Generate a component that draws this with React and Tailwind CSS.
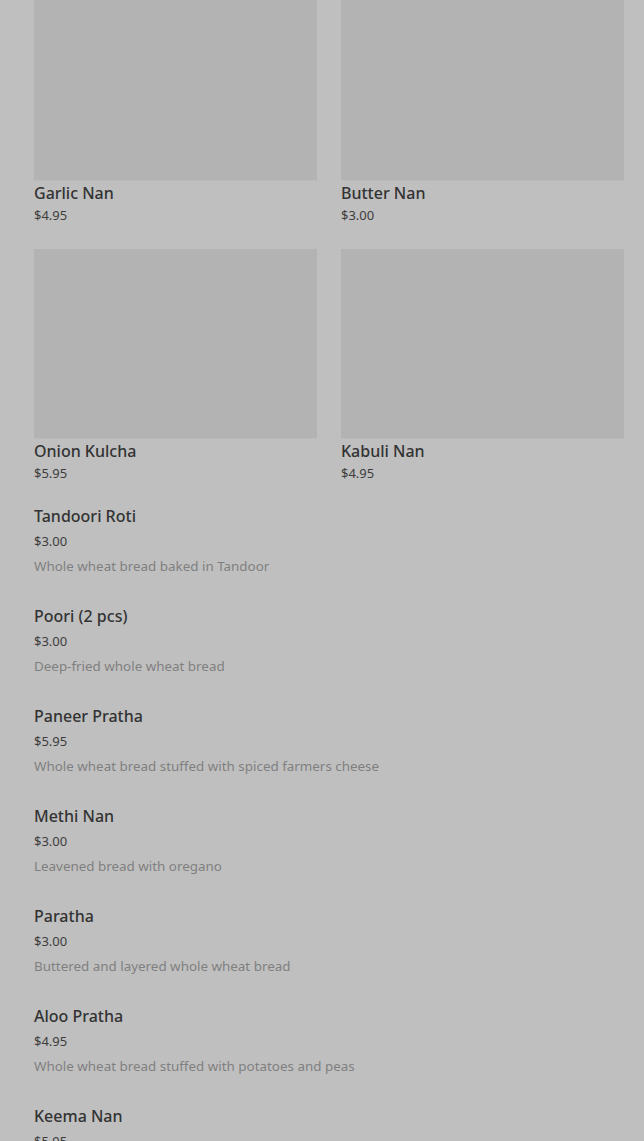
import React from 'react';

const gridItems = [
  { name: 'Garlic Nan', price: '$4.95' },
  { name: 'Butter Nan', price: '$3.00' },
  { name: 'Onion Kulcha', price: '$5.95' },
  { name: 'Kabuli Nan', price: '$4.95' },
];

const listItems = [
  { name: 'Tandoori Roti', price: '$3.00', desc: 'Whole wheat bread baked in Tandoor' },
  { name: 'Poori (2 pcs)', price: '$3.00', desc: 'Deep-fried whole wheat bread' },
  { name: 'Paneer Pratha', price: '$5.95', desc: 'Whole wheat bread stuffed with spiced farmers cheese' },
  { name: 'Methi Nan', price: '$3.00', desc: 'Leavened bread with oregano' },
  { name: 'Paratha', price: '$3.00', desc: 'Buttered and layered whole wheat bread' },
  { name: 'Aloo Pratha', price: '$4.95', desc: 'Whole wheat bread stuffed with potatoes and peas' },
  { name: 'Keema Nan', price: '$5.95', desc: 'Leavened bread stuffed with spiced minced lamb' },
];

const App = () => {
  return (
    <div className="min-h-screen h-[1141px] overflow-hidden bg-[#bfbfbf] font-['Noto_Sans',sans-serif]">
      <div className="pl-[34px] pr-[20px] -mt-[9px]">
        <div className="grid grid-cols-2 gap-x-[24px] gap-y-[24px]">
          {gridItems.map((item) => (
            <div key={item.name}>
              <div className="h-[190px] bg-[#b3b3b3] border-b border-[#bababa]" />
              <p className="text-[16px] leading-[24px] font-medium text-[#333333]">{item.name}</p>
              <p className="text-[13px] leading-[20px] text-[#3d3d3d]">{item.price}</p>
            </div>
          ))}
        </div>

        <div className="mt-[21px]">
          {listItems.map((item) => (
            <div key={item.name} className="pb-[28px]">
              <p className="text-[16px] leading-[24px] font-medium text-[#333333]">{item.name}</p>
              <p className="mt-[3px] text-[13px] leading-[20px] text-[#3d3d3d]">{item.price}</p>
              <p className="mt-[5px] text-[13.4px] leading-[20px] text-[#7f7f7f]">{item.desc}</p>
            </div>
          ))}
        </div>
      </div>
    </div>
  );
};

export default App;
